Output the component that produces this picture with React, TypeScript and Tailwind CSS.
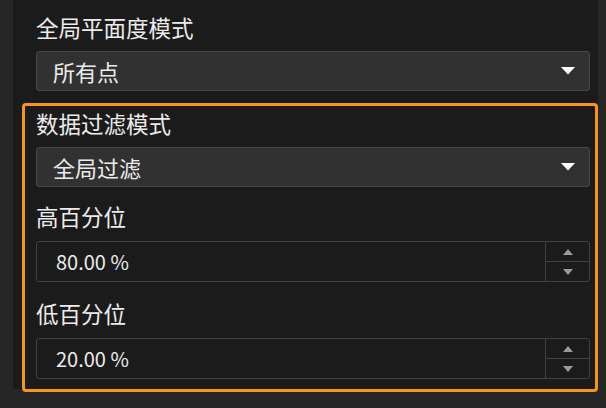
const font = { fontFamily: '"Noto Sans CJK SC", "Noto Sans", sans-serif' };

function Caret({ className }: { className?: string }) {
  return (
    <svg width="14" height="8" viewBox="0 0 14 8" className={className}>
      <path d="M0 0 H14 L7 7.5 Z" fill="currentColor" />
    </svg>
  );
}

function Select({ value }: { value: string }) {
  return (
    <div className="flex items-center h-[40px] bg-[#313131] border border-[#474747] rounded-[3px] pl-[16px] pr-[14px]">
      <span className="text-[22px] text-[#ececec]">{value}</span>
      <Caret className="ml-auto text-white" />
    </div>
  );
}

function Spin({ value }: { value: string }) {
  return (
    <div className="flex h-[41px] bg-[#1b1b1b] border border-[#404040] rounded-[3px]">
      <div className="flex-1 flex items-center pl-[19px] text-[20px] text-[#ececec]">{value}</div>
      <div className="w-[44px] flex flex-col border-l border-[#404040]">
        <div className="flex-1 flex items-center justify-center border-b border-[#404040]">
          <svg width="10" height="6" viewBox="0 0 10 6"><path d="M0 6 H10 L5 0 Z" fill="#9a9a9a" /></svg>
        </div>
        <div className="flex-1 flex items-center justify-center">
          <svg width="10" height="6" viewBox="0 0 10 6"><path d="M0 0 H10 L5 6 Z" fill="#9a9a9a" /></svg>
        </div>
      </div>
    </div>
  );
}

function Label({ text, className }: { text: string; className?: string }) {
  return <div className={`h-[28px] flex items-center text-[22.5px] text-[#ececec] ${className ?? ''}`}>{text}</div>;
}

export default function App() {
  return (
    <div className="w-[606px] h-[408px] bg-[#262626] overflow-hidden" style={font}>
      <div className="ml-[13px] w-[585px] h-[389px] bg-[#1b1b1b] pt-[14px]">
        <div className="ml-[23px] mr-[8px]">
          <Label text="全局平面度模式" />
          <div className="mt-[9px]">
            <Select value="所有点" />
          </div>
        </div>
        <div className="mt-[12px] ml-[9px] w-[576px] h-[289px] border-[3px] border-[#f7941d] rounded-[4px] pl-[11px] pr-[5px] pt-[4px]">
          <Label text="数据过滤模式" />
          <div className="mt-[9px]">
            <Select value="全局过滤" />
          </div>
          <Label text="高百分位" className="mt-[16px]" />
          <div className="mt-[10px]">
            <Spin value="80.00 %" />
          </div>
          <Label text="低百分位" className="mt-[18px]" />
          <div className="mt-[10px]">
            <Spin value="20.00 %" />
          </div>
        </div>
      </div>
    </div>
  );
}
